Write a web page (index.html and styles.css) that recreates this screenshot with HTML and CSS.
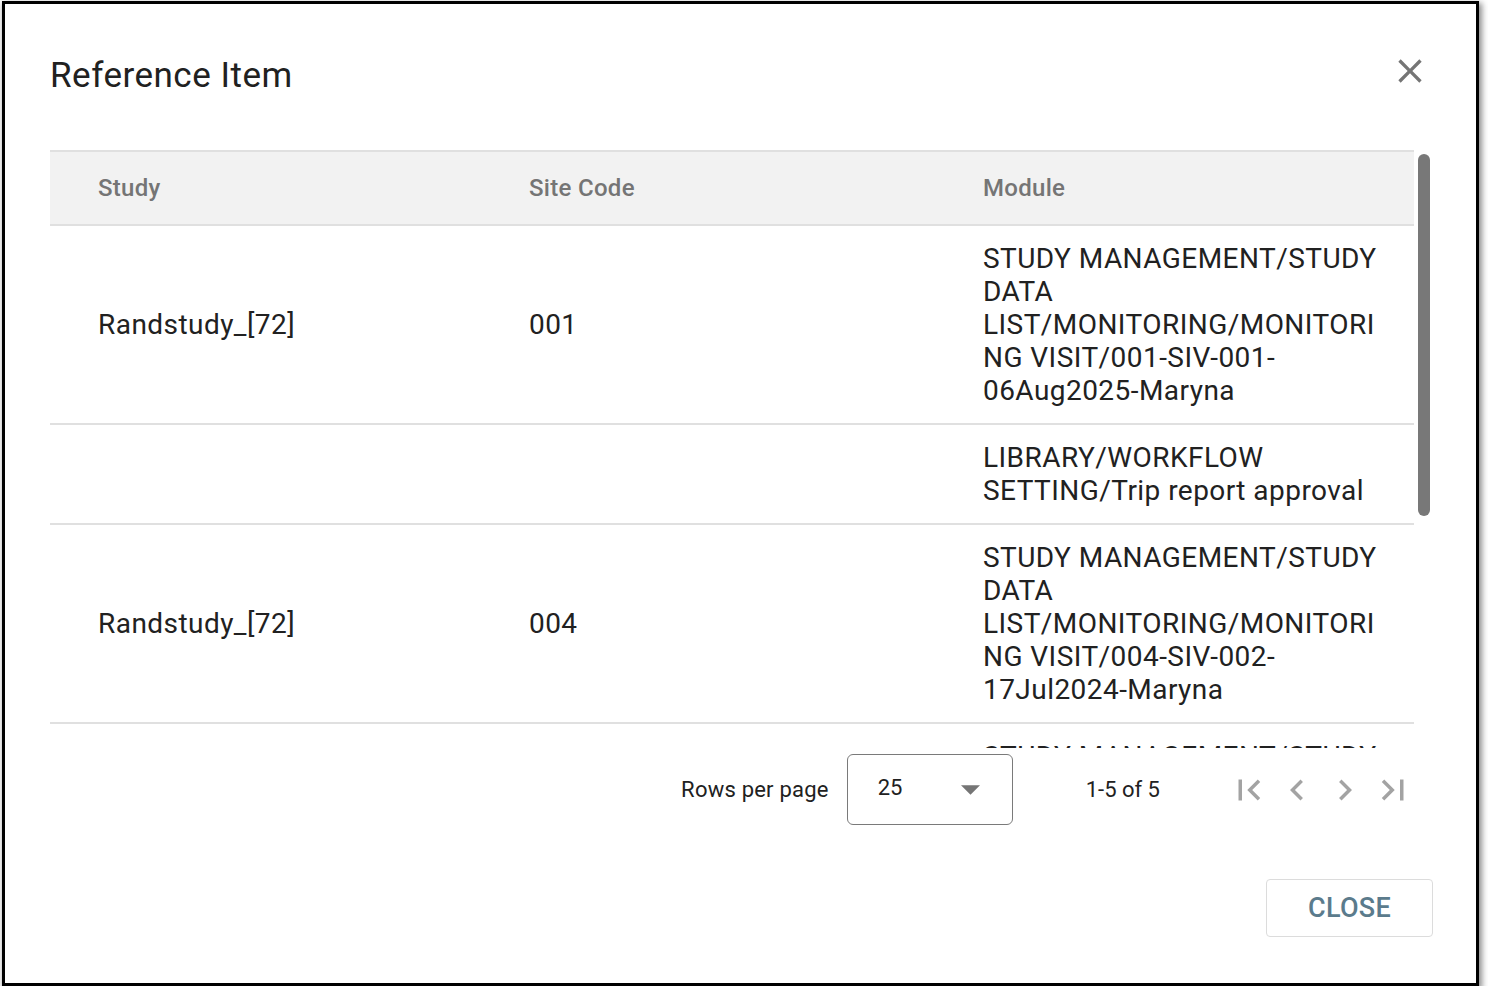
FILE: index.html
```html
<!DOCTYPE html>
<html lang="en">

<head>
  <meta charset="UTF-8">
  <meta name="viewport" content="width=device-width, initial-scale=1.0">
  <title>Reference Item</title>
  <link rel="stylesheet" href="styles.css">
</head>

<body>
  <div class="dialog">
    <div class="dialog-head">
      <h2 class="dialog-title">Reference Item</h2>
      <button class="icon-btn close-x" aria-label="close">
        <svg viewBox="0 0 24 24" width="40" height="40">
          <path d="M19 6.41L17.59 5 12 10.59 6.41 5 5 6.41 10.59 12 5 17.59 6.41 19 12 13.41 17.59 19 19 17.59 13.41 12z" />
        </svg>
      </button>
    </div>

    <div class="table-wrap">
      <div class="table-scroll">
        <div class="table-clip">
          <table class="ref-table">
            <colgroup>
              <col class="col-study">
              <col class="col-site">
              <col class="col-module">
            </colgroup>
            <thead>
              <tr>
                <th>Study</th>
                <th>Site Code</th>
                <th>Module</th>
              </tr>
            </thead>
            <tbody>
              <tr>
                <td>Randstudy_[72]</td>
                <td>001</td>
                <td class="module">STUDY MANAGEMENT/STUDY DATA LIST/MONITORING/MONITORING VISIT/001-SIV-001-06Aug2025-Maryna</td>
              </tr>
              <tr>
                <td></td>
                <td></td>
                <td class="module">LIBRARY/WORKFLOW SETTING/Trip report approval</td>
              </tr>
              <tr>
                <td>Randstudy_[72]</td>
                <td>004</td>
                <td class="module">STUDY MANAGEMENT/STUDY DATA LIST/MONITORING/MONITORING VISIT/004-SIV-002-17Jul2024-Maryna</td>
              </tr>
              <tr>
                <td>Randstudy_[72]</td>
                <td>004</td>
                <td class="module">STUDY MANAGEMENT/STUDY DATA LIST/MONITORING/MONITORING VISIT/004-SIV-003-18Jul2024-Maryna</td>
              </tr>
              <tr>
                <td>Randstudy_[72]</td>
                <td>001</td>
                <td class="module">STUDY MANAGEMENT/STUDY DATA LIST/MONITORING/MONITORING VISIT/001-SIV-002-07Aug2025-Maryna</td>
              </tr>
            </tbody>
          </table>
        </div>
        <!-- scrollbar drawn by hand, headless chrome hides the native one -->
        <div class="scroll-track">
          <div class="scroll-thumb"></div>
        </div>
      </div>

      <div class="pager">
        <span class="pager-label">Rows per page</span>
        <div class="pager-select">
          <span>25</span>
          <svg viewBox="0 0 10 5" width="19" height="10">
            <path d="M0 0l5 5 5-5z" />
          </svg>
        </div>
        <span class="pager-count">1-5 of 5</span>
        <div class="pager-nav">
          <span class="icon-btn nav">
            <svg viewBox="0 0 24 24" width="42" height="42"><path d="M18.41 16.59L13.82 12l4.59-4.59L17 6l-6 6 6 6zM6 6h2v12H6z" /></svg>
          </span>
          <span class="icon-btn nav">
            <svg viewBox="0 0 24 24" width="42" height="42"><path d="M15.41 7.41L14 6l-6 6 6 6 1.41-1.41L10.83 12z" /></svg>
          </span>
          <span class="icon-btn nav">
            <svg viewBox="0 0 24 24" width="42" height="42"><path d="M10 6L8.59 7.41 13.17 12l-4.58 4.59L10 18l6-6z" /></svg>
          </span>
          <span class="icon-btn nav">
            <svg viewBox="0 0 24 24" width="42" height="42"><path d="M5.59 7.41L10.18 12l-4.59 4.59L7 18l6-6-6-6zM16 6h2v12h-2z" /></svg>
          </span>
        </div>
      </div>
    </div>

    <div class="dialog-foot">
      <button class="btn-close">CLOSE</button>
    </div>
  </div>
</body>

</html>
```

FILE: styles.css
```css
html {
  font-size: 16px;
}

body {
  margin: 0;
  padding: 0;
  background: #fff;
  font-family: Roboto, "Liberation Sans", Arial, sans-serif;
  color: #212121;
}

.dialog {
  box-sizing: border-box;
  width: 1477px;
  margin: 1px 0 0 2px;
  border: 3px solid #000;
  background: #fff;
  box-shadow: 2px 3px 6px 1px rgba(0, 0, 0, 0.45);
}

.dialog-head {
  display: flex;
  justify-content: space-between;
  align-items: flex-start;
  padding: 47px 46px 54px 45px;
}

.dialog-title {
  margin: 4px 0 0;
  font-size: 35px;
  font-weight: 400;
  line-height: 41px;
  letter-spacing: 0.5px;
  color: #212121;
}

.icon-btn {
  display: flex;
  align-items: center;
  justify-content: center;
  padding: 0;
  border: 0;
  background: none;
}

.close-x svg {
  fill: #757575;
}

/* table */
.table-wrap {
  margin-left: 45px;
  width: 1384px;
}

.table-scroll {
  display: flex;
  height: 598px;
}

.table-clip {
  width: 1364px;
  overflow: hidden;
}

.scroll-track {
  box-sizing: border-box;
  width: 20px;
  padding: 4px;
}

.scroll-thumb {
  height: 362px;
  border-radius: 6px;
  background: #787878;
}

.ref-table {
  width: 1364px;
  table-layout: fixed;
  border-collapse: collapse;
}

.col-study {
  width: 431px;
}

.col-site {
  width: 454px;
}

.col-module {
  width: 479px;
}

.ref-table th {
  padding: 22px 30px 22px 48px;
  background: #f2f2f2;
  border-top: 2px solid #e0e0e0;
  border-bottom: 2px solid #e0e0e0;
  text-align: left;
  font-size: 24px;
  font-weight: 500;
  line-height: 28px;
  letter-spacing: 0.3px;
  color: #757575;
}

.ref-table td {
  padding: 16px 30px 16px 48px;
  border-bottom: 2px solid #e0e0e0;
  vertical-align: middle;
  font-size: 28px;
  line-height: 33px;
  letter-spacing: 0.45px;
  color: #212121;
  word-break: break-word;
  overflow-wrap: anywhere;
}

/* pagination */
.pager {
  display: flex;
  justify-content: flex-end;
  align-items: center;
  padding: 6px 20px 5px 0;
  font-size: 22px;
  color: #212121;
}

.pager-label {
  letter-spacing: 0.01em;
}

.pager-select {
  box-sizing: border-box;
  display: flex;
  align-items: center;
  justify-content: space-between;
  width: 166px;
  height: 71px;
  margin-left: 18px;
  padding: 0 32px 4px 30px;
  border: 1.5px solid #7a7a7a;
  border-radius: 6px;
  font-size: 22px;
}

.pager-select svg {
  fill: #757575;
  margin-top: 4px;
}

.pager-count {
  margin-left: 73px;
}

.pager-nav {
  display: flex;
  gap: 6px;
  margin-left: 68px;
}

.nav svg {
  fill: #a3a3a3;
}

/* footer */
.dialog-foot {
  display: flex;
  justify-content: flex-end;
  padding: 49px 43px 46px 0;
}

.btn-close {
  box-sizing: border-box;
  width: 167px;
  height: 58px;
  border: 1.5px solid #dcdcdc;
  border-radius: 4px;
  background: #fff;
  font-family: Roboto, "Liberation Sans", Arial, sans-serif;
  font-size: 27px;
  font-weight: 500;
  color: #5b7b8c;
  letter-spacing: 0.01em;
}
```
